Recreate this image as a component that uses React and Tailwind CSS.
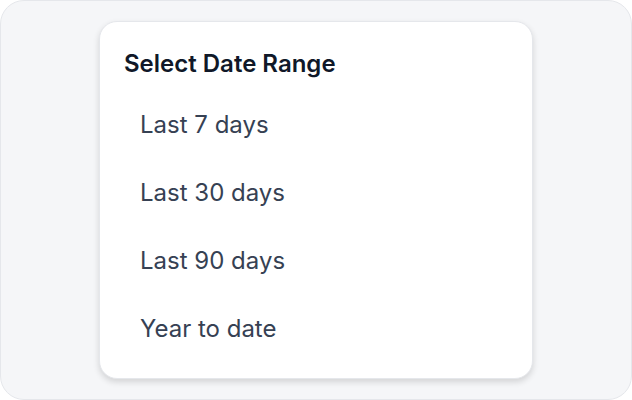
import React from 'react';

const ranges = ['Last 7 days', 'Last 30 days', 'Last 90 days', 'Year to date'];

export default function App() {
    return (
        <div
            className="w-[632px] h-[400px] bg-white"
            style={{fontFamily: 'Inter, "Noto Sans", sans-serif'}}
        >
            <div className="w-full h-full rounded-[24px] border border-gray-200 bg-[#f5f6f8] flex items-center justify-center">
                <div className="w-[434px] h-[358px] bg-white rounded-[18px] border border-gray-200 shadow-[0_3px_6px_rgba(0,0,0,0.14)] px-6 pt-[28px]">
                    <h2 className="text-[24px] font-semibold text-gray-900 leading-7 mb-[13px]">Select Date Range</h2>
                    <ul>
                        {ranges.map(range => (
                            <li key={range} className="px-4 py-5 text-[24px] leading-7 text-gray-700">
                                {range}
                            </li>
                        ))}
                    </ul>
                </div>
            </div>
        </div>
    );
}
